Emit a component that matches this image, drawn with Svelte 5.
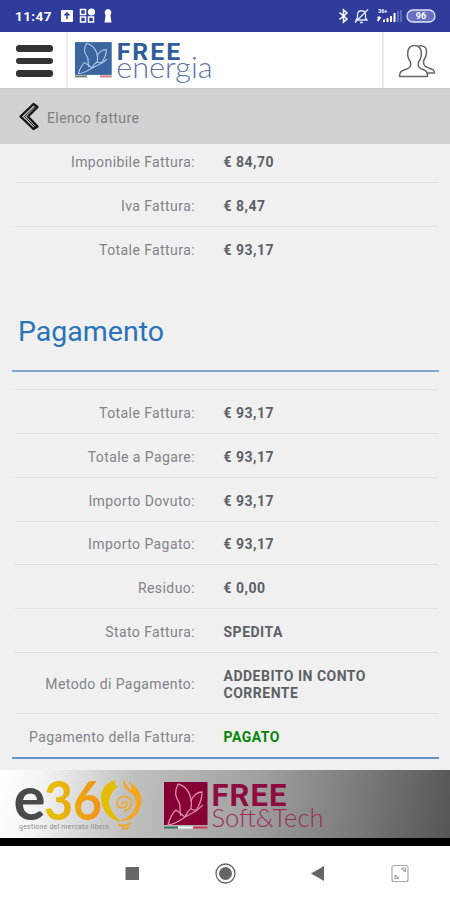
<script>
  const totals = [
    { label: 'Imponibile Fattura', value: '€ 84,70' },
    { label: 'Iva Fattura', value: '€ 8,47' },
    { label: 'Totale Fattura', value: '€ 93,17' }
  ]

  const payment = [
    { label: 'Totale Fattura', value: '€ 93,17' },
    { label: 'Totale a Pagare', value: '€ 93,17' },
    { label: 'Importo Dovuto', value: '€ 93,17' },
    { label: 'Importo Pagato', value: '€ 93,17' },
    { label: 'Residuo', value: '€ 0,00' },
    { label: 'Stato Fattura', value: 'SPEDITA' },
    { label: 'Metodo di Pagamento', value: 'ADDEBITO IN CONTO CORRENTE', tall: true },
    { label: 'Pagamento della Fattura', value: 'PAGATO', paid: true }
  ]
</script>

{#snippet butterfly()}
  <path d="M14 2C11 8 11 15 15 20C17 24 15 29 17 34M14 2C23 4 29 14 27 27" />
  <path d="M27 19C29 13 34 10 38 10C38 17 36 22 33 27" />
  <path d="M4 43C6 36 8 31 12 28C16 31 19 34 21 35L32 29L39 23M4 43C11 42 17 38 21 35C23 30 25 28 27 27C30 29 33 28 36 26" />
{/snippet}

{#snippet rows(items)}
  {#each items as item}
    <div class="row" class:tall={item.tall}>
      <span class="label">{item.label}:</span>
      <span class="value" class:paid={item.paid}>{item.value}</span>
    </div>
  {/each}
{/snippet}

<div class="screen">
  <div class="status">
    <span class="time">11:47</span>
    <svg class="left-icons" width="54" height="18" viewBox="0 0 54 18">
      <rect x="0" y="3" width="12" height="12" rx="1" fill="#fff" />
      <path d="M6 12V6M3.500 8.500L6 6L8.500 8.500" fill="none" stroke="#303c9b" stroke-width="1.500" />
      <g fill="none" stroke="#fff" stroke-width="1.500">
        <rect x="19.500" y="2.500" width="5" height="5" />
        <rect x="19.500" y="10" width="5" height="5" />
        <rect x="27.500" y="10" width="5" height="5" />
      </g>
      <circle cx="30.500" cy="5" r="3.600" fill="#fff" />
      <path d="M47 2a3.700 3.700 0 0 1 2.400 6.200L50.500 15.500H43.500L44.600 8.200A3.700 3.700 0 0 1 47 2z" fill="#fff" />
    </svg>
    <svg class="right-icons" width="100" height="18" viewBox="0 0 100 18">
      <path d="M2.500 5.500L10 12L6.500 15V3L10 6L2.500 12.500" fill="none" stroke="#fff" stroke-width="1.500" />
      <path d="M19 13H30L28.500 11V7.500C28 2.500 21 2.500 20.500 7.500V11ZM23 15.500H26M18 15.500L31 2.500" fill="none" stroke="#e5e8fa" stroke-width="1.300" />
      <text x="41" y="6" font-size="5.500" font-weight="700" fill="#fff">36+</text>
      <path d="M40.500 14L43.500 10M40.500 10.500H42.500M47 12.500V15M50.500 11V15M54 9V15M57.500 6V15" fill="none" stroke="#fff" stroke-width="2" />
      <path d="M61 4V15M64 3V15" stroke="#7079c2" stroke-width="1.500" />
      <rect x="70" y="3" width="28" height="12" rx="6" fill="#6871bf" stroke="#dfe2f7" stroke-width="1.300" />
      <text x="84" y="12.200" text-anchor="middle" font-size="9" font-weight="700" fill="#fff">96</text>
    </svg>
  </div>

  <header>
    <button class="menu" aria-label="Menu">
      <i></i><i></i><i></i>
    </button>
    <svg class="logo" width="316" height="56" viewBox="0 0 316 56">
      <rect x="7" y="10" width="37" height="33" fill="#3b659f" />
      <g transform="translate(7 10) scale(.83 .74)" fill="none" stroke="#b8d0ea" stroke-width="1.300">{@render butterfly()}</g>
      <rect x="7" y="43.500" width="12" height="2" fill="#6b8074" />
      <rect x="32" y="43.500" width="12" height="2" fill="#d37a82" />
      <text x="49" y="28" class="free" font-size="25" textLength="64" fill="#2f5d9b">FREE</text>
      <text x="48.500" y="46" class="thin" font-size="29" textLength="97" lengthAdjust="spacingAndGlyphs" fill="#5f76a5">energia</text>
    </svg>
    <button class="users" aria-label="Utenti">
      <svg width="38" height="34" viewBox="0 0 38 34" fill="#fff" stroke="#666" stroke-width="1.500" stroke-linejoin="round">
        <path d="M19 3C22 0.500 29 1.500 28.500 8C28.500 11 27.500 14 25.500 17C25 22 28 23 32 24.500C35 25.500 36.500 26 36.500 29H28" />
        <path d="M1.500 32.500C1.500 28 3 27 7.500 25.500C12 24 13.500 22.500 12.500 18C8.500 13 8 1.500 16.500 1.500S24.500 13 20.500 18C19.500 22.500 21 24 25 25.500C28.500 27 29.500 28 29.500 32.500Z" />
      </svg>
    </button>
  </header>

  <nav class="back">
    <svg width="22" height="29" viewBox="0 0 22 29">
      <path d="M15.500 2L2.500 14.500L15.500 27L19.500 24.500L10 14.500L19.500 5Z" fill="#bbb" stroke="#151515" stroke-width="2.300" stroke-linejoin="round" />
      <path d="M17 4.800L6.500 14.500L17 25" fill="none" stroke="#151515" stroke-width="1" />
    </svg>
    <span>Elenco fatture</span>
  </nav>

  <main>
    <section class="totals">
      {@render rows(totals)}
    </section>
    <h2>Pagamento</h2>
    <section class="payment">
      {@render rows(payment)}
    </section>
  </main>

  <footer>
    <svg width="450" height="68" viewBox="0 0 450 68">
      <defs>
        <linearGradient id="gold" x1="0" x2="1">
          <stop offset="0" stop-color="#e3c400" />
          <stop offset="1" stop-color="#f39118" />
        </linearGradient>
      </defs>
      <text x="13.500" y="49.500" class="e360" font-size="62" textLength="32" lengthAdjust="spacingAndGlyphs" fill="#4a4a4c">e</text>
      <text x="44" y="49.500" class="e360" font-size="53" textLength="58" lengthAdjust="spacingAndGlyphs" fill="url(#gold)">36</text>
      <path d="M116 10C102 13 98 27 103 37C106 46 113 50 121 52C111 42 107 34 110 27C112 22 115 18 119 17C115 16 114 13 116 10Z" fill="#e5bd00" />
      <path d="M124 9C125 15 129 17 130 21C132 18 131 15 129 12C141 18 145 31 138 42C134 49 127 51 119 51C132 47 138 38 135 28C133 23 129 23 127 20C124 17 122 13 124 9Z" fill="#f5a51f" />
      <path d="M124 41C131 40 134 32 129 28C124 24 116 28 117 34C118 39 126 39 127 34C127 31 122 31 122 35" fill="none" stroke="#edaa2c" stroke-width="1.700" />
      <path d="M118 54.500C123 57 128 55 131 53M122 58C125 59 128 58 129 57" fill="none" stroke="#f0aa2a" stroke-width="2.200" />
      <text x="19" y="58.500" font-size="7" textLength="90" fill="#8d8d8d">gestione del mercato libero</text>

      <rect x="164" y="12" width="43.500" height="43" fill="#860034" />
      <g transform="translate(164 12)" fill="none" stroke="#dc8dab" stroke-width="1.300">{@render butterfly()}</g>
      <rect x="164" y="56.500" width="14" height="2" fill="#347c56" />
      <rect x="178" y="56.500" width="15" height="2" fill="#fff" />
      <rect x="193" y="56.500" width="14.500" height="2" fill="#d92f51" />
      <text x="211.500" y="35.500" class="free" font-size="31" textLength="75" fill="#900b40">FREE</text>
      <text x="211.500" y="56.500" class="thin" font-size="24.500" textLength="112" lengthAdjust="spacingAndGlyphs" fill="#9b2c5c">Soft&amp;Tech</text>
    </svg>
  </footer>

  <div class="softkeys">
    <svg width="450" height="54" viewBox="0 0 450 54">
      <rect x="125.500" y="21" width="13.500" height="13" fill="#666" />
      <circle cx="225.500" cy="27.500" r="9.500" fill="none" stroke="#666" stroke-width="1.300" />
      <circle cx="225.500" cy="27.500" r="6.500" fill="#666" />
      <path d="M311 27.500L324 20V35Z" fill="#666" />
      <g fill="none" stroke="#aaa" stroke-width="1.200">
        <rect x="392" y="19.500" width="16" height="16" rx="2" />
        <path d="M401.500 22H405.500V26M401.500 22L405.500 26M395 29V32.500H399M395 29L399 32.500" />
      </g>
    </svg>
  </div>
</div>

<style>
  :global(body) {
    margin: 0;
  }

  .screen {
    display: flex;
    flex-direction: column;
    width: 450px;
    height: 900px;
    overflow: hidden;
    background: #f0f0f0;
    font-family: Roboto, "Liberation Sans", sans-serif;
  }

  svg {
    display: block;
    overflow: visible;
    font-family: Roboto, sans-serif;
  }

  button {
    border: 0;
    background: none;
    padding: 0;
  }

  .status {
    display: flex;
    align-items: center;
    box-sizing: border-box;
    height: 32px;
    padding: 0 13px 0 15px;
    background: #303c9b;
    color: #fff;
  }

  .time {
    width: 46px;
    font-size: 13.5px;
    font-weight: 700;
    letter-spacing: 0.4px;
  }

  .right-icons {
    margin-left: auto;
  }

  header {
    display: flex;
    box-sizing: border-box;
    height: 57px;
    background: #fff;
    border-bottom: 1px solid #ccc;
  }

  .menu {
    display: flex;
    flex-direction: column;
    gap: 6px;
    box-sizing: border-box;
    width: 68px;
    padding: 13px 0 0 16px;
    border-right: 2px solid #ececec;
  }

  .menu i {
    width: 37px;
    height: 6.5px;
    border-radius: 3px;
    background: #333;
  }

  .users {
    box-sizing: border-box;
    width: 68px;
    margin-left: auto;
    padding: 2px 0 0 14px;
    border-left: 2px solid #e8e8e8;
  }

  .logo {
    flex: none;
    width: 314px;
  }

  .free {
    font-family: Roboto, sans-serif;
    font-weight: 700;
  }

  .thin {
    font-family: Lato, sans-serif;
    font-weight: 300;
  }

  .e360 {
    font-family: Lato, sans-serif;
    font-weight: 700;
  }

  .back {
    display: flex;
    align-items: center;
    gap: 7px;
    height: 55px;
    padding-left: 18px;
    background: #d1d1d1;
    color: #7c7e80;
    font-size: 14px;
    letter-spacing: 0.4px;
  }

  .back span {
    padding-top: 2px;
  }

  main {
    height: 626px;
    padding: 0 11px 0 12px;
  }

  .row {
    display: flex;
    align-items: center;
    box-sizing: border-box;
    height: 43.8px;
    margin: 0 1px 0 3px;
    padding-top: 4px;
    border-bottom: 1px solid #e4e4e4;
    font-size: 14px;
    line-height: 17px;
    letter-spacing: 0.5px;
  }

  .row.tall {
    height: 61px;
  }

  .row:last-child {
    border-bottom: 0;
  }

  .label {
    width: 180px;
    text-align: right;
    color: #818388;
    letter-spacing: 0.42px;
  }

  .value {
    width: 170px;
    margin-left: 28.5px;
    color: #5d6066;
    font-weight: 700;
  }

  .value.paid {
    color: #078507;
  }

  .totals {
    padding-top: 1px;
    margin-top: -6px;
  }

  h2 {
    box-sizing: border-box;
    height: 102px;
    margin: 0;
    padding: 45px 0 0 6px;
    border-bottom: 2.500px solid #7da6d3;
    color: #2a73b8;
    font-size: 28.5px;
    line-height: 34px;
    font-weight: 400;
    letter-spacing: 0;
  }

  .payment {
    padding-top: 17px;
    border-bottom: 2.500px solid #6493cc;
  }

  .payment .row:first-child {
    height: 44.6px;
    border-top: 1px solid #e4e4e4;
  }

  .payment .row:last-child {
    height: 43px;
  }

  footer {
    height: 68px;
    background: linear-gradient(100deg, #fff 0%, #f4f4f4 9%, #c0c0c0 29%, #a2a2a2 55%, #7c7c7c 78%, #555 100%);
    border-bottom: 8px solid #000;
  }

  .softkeys {
    height: 54px;
    background: #fff;
  }
</style>
